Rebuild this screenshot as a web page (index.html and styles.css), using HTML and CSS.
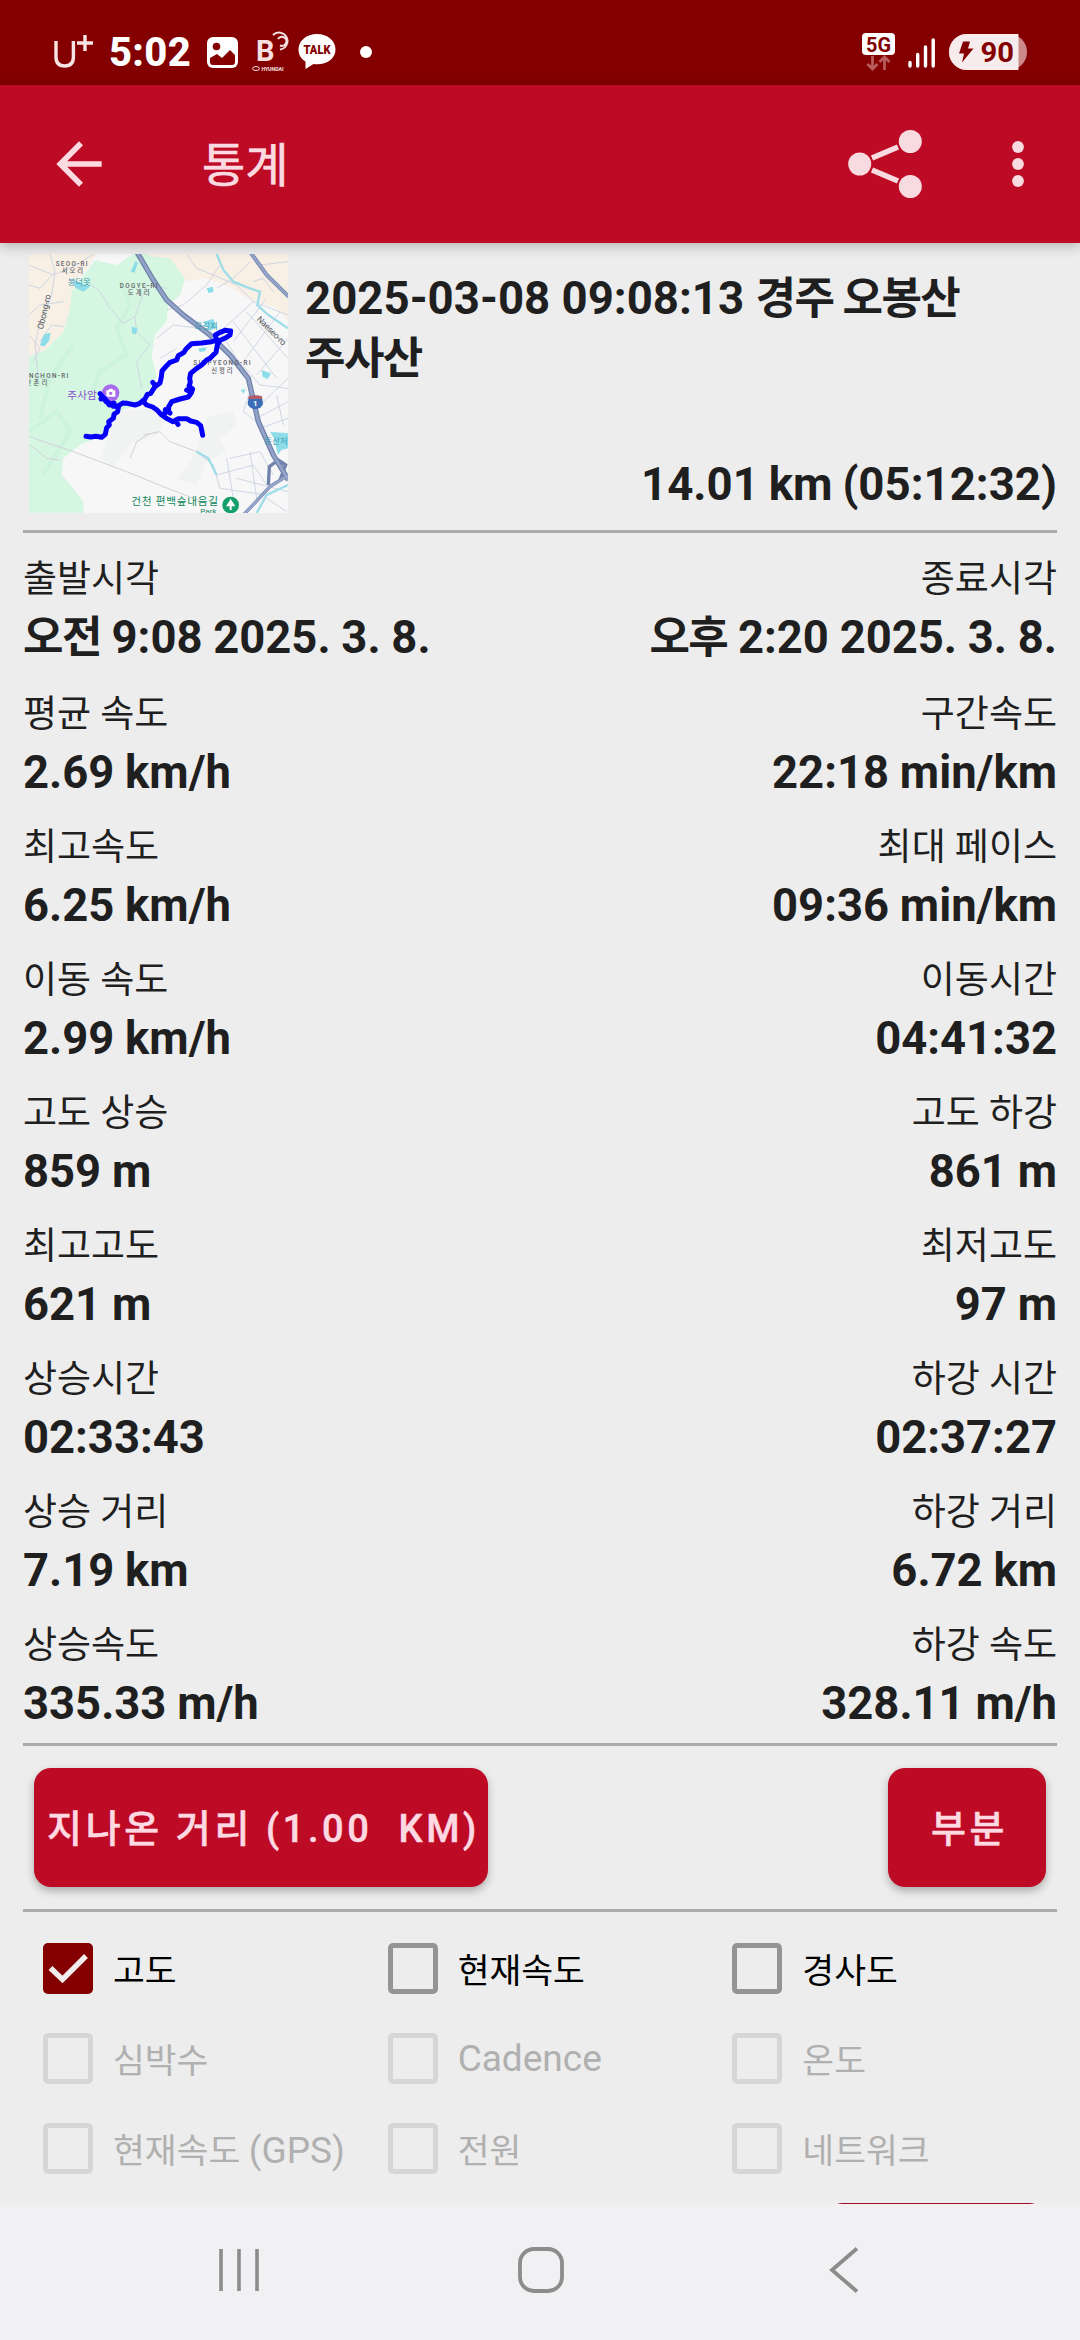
FILE: index.html
```html
<!DOCTYPE html>
<html lang="ko">
<head>
    <meta charset="UTF-8">
    <meta name="viewport" content="width=device-width, initial-scale=1.0">
    <title>통계</title>
    <link rel="stylesheet" href="styles.css">
</head>
<body>
    <div class="status-bar">
        <div class="status-left">
            <svg class="carrier" width="40" height="34" viewBox="0 0 40 34" fill="none" stroke="#f6e4e4" stroke-width="3.4">
                <path d="M2 7v16q0 9 8.700 9t8.700-9V7M23 9h16M31 1v16"/>
            </svg>
            <span class="clock">5:02</span>
            <svg class="gallery" width="31" height="31" viewBox="0 0 31 31">
                <rect width="31" height="31" rx="6" fill="#fff"/>
                <circle cx="9.500" cy="9.500" r="3.800" fill="#840000"/>
                <path d="M3 21l7-4 5 4 8-8 5 5v7q0 3-3 3H6q-3 0-3-3z" fill="#840000"/>
            </svg>
            <svg class="blue-link" width="38" height="42" viewBox="0 0 38 42" fill="none">
                <text x="4" y="30" font-size="29" font-weight="700" fill="#f6e0e0">B</text>
                <path d="M21 4a8.500 8.500 0 1 1 7 14.500M26 8a4.500 4.500 0 1 1 2 6.500" stroke="#f6e0e0" stroke-width="2"/>
                <ellipse cx="4" cy="37.500" rx="3.400" ry="2" stroke="#f6e0e0"/>
                <text x="9.500" y="39.500" font-size="5.200" font-weight="700" fill="#f6e0e0">HYUNDAI</text>
            </svg>
            <svg class="talk" width="38" height="36" viewBox="0 0 38 36">
                <path d="M19 0C8.500 0 .5 6.500.5 15.500c0 5 2.500 9.500 7 12L7.500 35l8-5q1.500.3 3.500.3c10.500 0 18.500-6 18.500-14.800S29.500 0 19 0z" fill="#fff"/>
                <text x="5.500" y="20" font-size="12.500" font-weight="900" textLength="27" lengthAdjust="spacingAndGlyphs" fill="#840000">TALK</text>
            </svg>
            <span class="more-dot"></span>
        </div>
        <div class="status-right">
            <svg width="33" height="38" viewBox="0 0 33 38">
                <rect width="33" height="22" rx="4" fill="#fff"/>
                <text x="4" y="18.500" font-size="20.500" font-weight="700" textLength="25" lengthAdjust="spacingAndGlyphs" fill="#840000">5G</text>
                <path d="M10.500 23v13M5.500 31l5 5 5-5M22.500 37V24M17.500 29l5-5 5 5" fill="none" stroke="#b85c5c" stroke-width="2.800"/>
            </svg>
            <svg class="signal" width="28" height="31" viewBox="0 0 28 31" stroke="#fff" stroke-width="3.400" stroke-linecap="round">
                <path d="M2 25.500v3.500M9.700 17.500V29M17.500 10v19M25.200 3v26"/>
            </svg>
            <svg class="battery" width="78" height="36" viewBox="0 0 78 36">
                <rect width="78" height="36" rx="18" fill="#cd8a8a"/>
                <path d="M18 0h51.500v36H18a18 18 0 0 1 0-36z" fill="#f6eceb"/>
                <path d="M14 7.500h7l-2 7h5.500L13 28.500l2-9H10z" fill="#840000"/>
                <text x="31.500" y="27.500" font-size="27.500" font-weight="700" textLength="33.500" lengthAdjust="spacingAndGlyphs" fill="#840000">90</text>
            </svg>
        </div>
    </div>

    <header class="app-bar">
        <svg class="back" width="68" height="68" viewBox="0 0 24 24"><path fill="#fbdbe1" d="M20 11H7.830l5.590-5.590L12 4l-8 8 8 8 1.410-1.410L7.830 13H20v-2z"/></svg>
        <h1>통계</h1>
        <svg class="share" width="74" height="68" viewBox="0 0 74 68" fill="#f8dbe0">
            <circle cx="11.700" cy="34" r="11.500"/>
            <circle cx="62.300" cy="11.500" r="11.500"/>
            <circle cx="62.300" cy="56.500" r="11.500"/>
            <path d="M24 28L50 17M24 40l26 11" stroke="#f8dbe0" stroke-width="5.600"/>
        </svg>
        <svg class="menu" width="12" height="46" viewBox="0 0 12 46" fill="#f8dbe0">
            <circle cx="6" cy="6" r="5.900"/>
            <circle cx="6" cy="23" r="5.900"/>
            <circle cx="6" cy="40" r="5.900"/>
        </svg>
    </header>

    <main class="content">
        <section class="summary">
            <svg class="map" width="259" height="259" viewBox="27 27 777 777">
                <rect x="27" y="27" width="777" height="777" fill="#f7f7f8"/>
                <path d="M27 27H230L180 100 150 190 130 260 70 320 27 335z" fill="#f8efe5"/>
                <path d="M375 27H804V230L770 190 690 165 640 130 560 100 480 110 440 70z" fill="#f8efe5"/>
                <path d="M225 45L290 60 340 27H380L400 35 450 40 495 100 480 150 445 180 440 230 405 270 395 330 410 400 375 450 340 485 290 500 260 560 215 585 180 600 130 640 125 690 160 730 190 770V804H27V335L75 315 130 260 150 190 155 140z" fill="#d5f7e1"/>
                <path d="M300 110L330 180 290 250 320 330 240 380 210 460M160 300L90 400 60 520M27 560L110 500 150 560 70 690" fill="none" stroke="#ccf3dc" stroke-width="12"/>
                <path d="M560 520L640 495 650 540 600 580 620 620 560 650 530 720 470 700 520 640z" fill="#f0f3f1"/>
                <path d="M290 500L380 490 440 520 410 570 330 600 280 670 240 640z" fill="#f1f3f3"/>
                <g fill="none" stroke="#cfd6e4" stroke-width="3">
                    <path d="M90 27L105 80 95 150 60 230 45 300 55 400M27 60L100 90 170 60 220 27M27 210L60 180 130 170M105 80L60 130 27 120M60 290L95 240 130 245M27 270L60 310 40 350"/>
                    <path d="M200 110L240 140 270 190 310 235 345 215 380 120 440 130M345 215L350 260 390 300 350 350 365 430M440 195L490 180 560 120 600 60M410 280L460 240 540 250M420 340L470 310"/>
                    <path d="M500 27L530 70 580 90 650 120 700 170 600 260 650 340 720 420 804 430M590 130L640 100 690 50M700 170L804 210M720 60L804 50M680 200L804 340M640 230L770 400M740 160L640 290M780 200L670 350M804 280L710 390M804 400L720 480M700 110L730 100 760 140"/>
                    <path d="M710 520L804 470M720 550L804 520M770 450L790 540M690 440L670 500 710 530M630 640L720 620 760 690M590 690L700 660 740 720M620 640L640 760M690 620L710 760M600 730L740 750M650 700L804 740M740 760L800 800"/>
                    <path d="M27 575L160 620 320 680 430 725 560 775M370 570L420 560 450 590 530 620 580 660 600 730M330 640L350 590 390 565M30 600L80 640 120 645" stroke="#d3d1d9"/>
                </g>
                <path d="M590 27L610 75 640 110 690 130 720 140 712 180 745 210 804 250M710 804L740 750 804 720M530 620L565 640 590 690" fill="none" stroke="#9cdde8" stroke-width="7"/>
                <path d="M332 80l14-32 8 5-10 30zM160 105l50 20-20 15-25-12zM60 300l12-32 20-5-5 25-15 17zM335 245l18 5-5 18-12-3zM560 130l18-5 3 15-15 5zM535 310l25-3-5 12-16 2zM725 375l28 10-10 18-15-8zM750 560l54 5v45l-20 5-10 15-12-50zM550 230l30-8 12 25-22 10zM662 435l15-3-6 14z" fill="#8ddce9"/>
                <g fill="none" stroke="#7183ad" stroke-width="16">
                    <path d="M350 20L400 105 440 165 490 210 570 270 630 330 685 400 715 530 760 630 805 705"/>
                    <path d="M690 20L740 90 806 155" stroke-width="12"/>
                    <path d="M805 690L750 725 672 808M745 720L748 665 775 645 797 660 780 705" stroke-width="10"/>
                </g>
                <path d="M350 20L400 105 440 165 490 210 570 270 630 330 685 400 715 530 760 630 805 705M805 690L750 725 672 808M690 20L740 90 806 155" fill="none" stroke="#94a4c9" stroke-width="8"/>
                <g class="place">
                    <text x="107" y="63" textLength="96">SEOO-RI</text>
                    <text x="125" y="84" textLength="64">서오리</text>
                    <text x="299" y="128" textLength="114">DOGYE-RI</text>
                    <text x="323" y="149" textLength="66">도계리</text>
                    <text x="520" y="361" textLength="172">SINPYEONG-RI</text>
                    <text x="574" y="383" textLength="64">신평리</text>
                    <text x="27" y="398" textLength="118">NCHON-RI</text>
                    <text x="16" y="419" textLength="66">천촌리</text>
                </g>
                <g class="water">
                    <text x="143" y="121">봉덕못</text>
                    <text x="524" y="252">모길지</text>
                    <text x="733" y="597" textLength="70">동산저</text>
                </g>
                <text class="road" transform="translate(69 254) rotate(-77)" textLength="106">Obong-ro</text>
                <text class="road" transform="translate(709 224) rotate(45)" textLength="112">Naeseo-ro</text>
                <text class="temple" x="142" y="461">주사암</text>
                <circle cx="272" cy="444" r="26" fill="#a76bec"/>
                <path d="M259 436h6l3-5h9l3 5h6v19h-27z" fill="#fff"/>
                <circle cx="272" cy="445" r="5" fill="#a76bec"/>
                <text class="park" x="334" y="781" textLength="260">건천 편백숲내음길</text>
                <text class="park-sub" x="541" y="808">Park</text>
                <circle cx="632" cy="780" r="25" fill="#16a06c"/>
                <path d="M632 762l14 22h-11v11h-6v-11h-11z" fill="#fff"/>
                <path d="M686 456q20-7 40 0l3 20q-2 12-23 17-21-5-23-17z" fill="#3c6cb8"/>
                <path d="M686 454q20-6 40 0v8h-40z" fill="#b35d68"/>
                <text x="699" y="483" font-size="24" font-weight="700" fill="#fff">1</text>
                <!-- recorded track -->
                <g fill="none" stroke="#0500f8" stroke-width="15" stroke-linejoin="round" stroke-linecap="round">
                    <path d="M198 574L212 576 228 574 245 577 256 568 260 548 268 540 266 530 280 520 282 508 293 500 296 482 280 484 270 475 258 470 250 458 240 446M243 462L254 460 268 480 282 474M296 482L308 474 322 475 345 480 358 476 375 462 382 448 392 445 405 425 420 414 424 396 426 378 440 362 450 352 470 345 475 332 492 322 498 312 515 296 545 294 575 290 590 286 586 270 600 262 615 256 632 258 630 270 618 278 600 286 592 300 588 322 570 340 560 345 545 360 530 370 512 385 509 400 511 412 507 424 518 432 513 445 505 456 480 462 455 470 446 485 446 496 432 506"/>
                    <path d="M368 468L380 480 398 486 412 496 425 510 440 520 458 530 475 521 500 521 512 528 530 532 542 542 545 556 548 571M470 532L474 538M405 420L398 412M500 435L514 442M436 494L450 504"/>
                </g>
            </svg>
            <div class="summary-text">
                <h2>2025-03-08 09:08:13 <span class="ko">경주 오봉산 주사산</span></h2>
                <p class="total">14.01 km (05:12:32)</p>
            </div>
        </section>

        <section class="stats">
            <div class="stat"><span class="label">출발시각</span><span class="value"><span class="ko">오전</span> 9:08 2025. 3. 8.</span></div>
            <div class="stat right"><span class="label">종료시각</span><span class="value"><span class="ko">오후</span> 2:20 2025. 3. 8.</span></div>
            <div class="stat"><span class="label">평균 속도</span><span class="value">2.69 km/h</span></div>
            <div class="stat right"><span class="label">구간속도</span><span class="value">22:18 min/km</span></div>
            <div class="stat"><span class="label">최고속도</span><span class="value">6.25 km/h</span></div>
            <div class="stat right"><span class="label">최대 페이스</span><span class="value">09:36 min/km</span></div>
            <div class="stat"><span class="label">이동 속도</span><span class="value">2.99 km/h</span></div>
            <div class="stat right"><span class="label">이동시간</span><span class="value">04:41:32</span></div>
            <div class="stat"><span class="label">고도 상승</span><span class="value">859 m</span></div>
            <div class="stat right"><span class="label">고도 하강</span><span class="value">861 m</span></div>
            <div class="stat"><span class="label">최고고도</span><span class="value">621 m</span></div>
            <div class="stat right"><span class="label">최저고도</span><span class="value">97 m</span></div>
            <div class="stat"><span class="label">상승시간</span><span class="value">02:33:43</span></div>
            <div class="stat right"><span class="label">하강 시간</span><span class="value">02:37:27</span></div>
            <div class="stat"><span class="label">상승 거리</span><span class="value">7.19 km</span></div>
            <div class="stat right"><span class="label">하강 거리</span><span class="value">6.72 km</span></div>
            <div class="stat"><span class="label">상승속도</span><span class="value">335.33 m/h</span></div>
            <div class="stat right"><span class="label">하강 속도</span><span class="value">328.11 m/h</span></div>
        </section>

        <section class="actions">
            <button class="btn btn-distance">지나온 거리 (1.00&nbsp; KM)</button>
            <button class="btn btn-part">부분</button>
        </section>

        <section class="checks">
            <label class="check checked">
                <span class="box"><svg width="50" height="51" viewBox="0 0 50 51" fill="none" stroke="#f2eded" stroke-width="5.500"><path d="M7.500 25l12 11.500L43 13"/></svg></span>고도
            </label>
            <label class="check"><span class="box"></span>현재속도</label>
            <label class="check"><span class="box"></span>경사도</label>
            <label class="check disabled"><span class="box"></span>심박수</label>
            <label class="check disabled"><span class="box"></span><span class="latin">Cadence</span></label>
            <label class="check disabled"><span class="box"></span>온도</label>
            <label class="check disabled"><span class="box"></span><span>현재속도 <span class="latin">(GPS)</span></span></label>
            <label class="check disabled"><span class="box"></span>전원</label>
            <label class="check disabled"><span class="box"></span>네트워크</label>
        </section>
        <div class="next-button"></div>
    </main>

    <nav class="nav-bar">
        <svg width="42" height="46" viewBox="0 0 42 46" stroke="#8c8c8d" stroke-width="3.600"><path d="M3 2v42M21 2v42M39 2v42"/></svg>
        <svg class="home" width="46" height="46" viewBox="0 0 46 46" fill="none" stroke="#8c8c8d" stroke-width="3.800"><rect x="2" y="2" width="42" height="42" rx="14"/></svg>
        <svg width="30" height="46" viewBox="0 0 30 46" fill="none" stroke="#8c8c8d" stroke-width="3.800"><path d="M28 1.500L3 23l25 21.500"/></svg>
    </nav>
</body>
</html>
```

FILE: styles.css
```css
* {
    margin: 0;
    padding: 0;
    box-sizing: border-box;
}

body {
    width: 1080px;
    height: 2340px;
    display: flex;
    flex-direction: column;
    overflow: hidden;
    background: #ededed;
    color: #1f1f1f;
    font-family: Roboto, "Noto Sans CJK KR", sans-serif;
}

svg {
    display: block;
    flex: none;
}

.status-bar {
    height: 85px;
    flex: none;
    background: #840000;
    color: #fff;
    display: flex;
    justify-content: space-between;
    padding: 19px 53px 0 54px;
}

.status-left,
.status-right {
    height: 66px;
    display: flex;
    align-items: center;
}

.carrier {
    margin-bottom: 3px;
}

.clock {
    width: 83px;
    margin-left: 15px;
    font-size: 40px;
    font-weight: 800;
    letter-spacing: 0.3px;
}

.gallery {
    margin-left: 15px;
}

.blue-link {
    margin-left: 14px;
}

.talk {
    margin-left: 8px;
}

.more-dot {
    width: 12px;
    height: 12px;
    margin-left: 24px;
    border-radius: 50%;
    background: #fff;
}

.signal {
    margin-left: 13px;
}

.battery {
    margin-left: 13px;
}

.app-bar {
    height: 158px;
    flex: none;
    position: relative;
    z-index: 1;
    display: flex;
    align-items: center;
    padding: 0 56px 0 45px;
    background: #bd0a25;
    box-shadow: 0 3px 12px rgba(0, 0, 0, 0.25);
}

.app-bar h1 {
    flex: 1;
    margin-left: 89px;
    padding-bottom: 5px;
    color: #fbdbe1;
    font-size: 47px;
    font-weight: 400;
    -webkit-text-stroke: 0.7px #fbdbe1;
}

.menu {
    margin-left: 90px;
}

.content {
    height: 1961px;
    flex: none;
    padding: 11px 23px 0;
    overflow: hidden;
}

.summary {
    height: 276px;
    display: flex;
    padding-left: 6px;
}

.place {
    font-size: 19px;
    font-weight: 500;
    fill: #5f6368;
}

.water {
    font-size: 25px;
    fill: #3b9bb2;
}

.road {
    font-size: 26px;
    fill: #555b63;
}

.temple {
    font-size: 32px;
    fill: #8d4fd0;
}

.park {
    font-size: 32px;
    fill: #14875b;
}

.park-sub {
    font-size: 24px;
    fill: #14875b;
}

.summary-text {
    flex: 1;
    display: flex;
    flex-direction: column;
    justify-content: space-between;
    padding: 15px 0 15px 17px;
}

.summary-text h2 {
    width: 700px;
    font-size: 45.6px;
    line-height: 60px;
    font-weight: 700;
    word-break: keep-all;
}

.total {
    font-size: 45.6px;
    line-height: 60px;
    font-weight: 700;
    text-align: right;
    word-spacing: -1.5px;
}

.ko {
    font-size: 44px;
    letter-spacing: -1.6px;
}

.stats {
    height: 1213px;
    display: grid;
    grid-template-columns: 1fr 1fr;
    grid-template-rows: 135px;
    grid-auto-rows: 133px;
    padding-top: 20px;
    border-top: 3px solid #aaa;
}

.stat {
    display: flex;
    flex-direction: column;
    white-space: nowrap;
}

.right {
    align-items: flex-end;
}

.label {
    margin-bottom: 1px;
    font-size: 37px;
    line-height: 54px;
}

.value {
    font-size: 45.4px;
    line-height: 60px;
    font-weight: 700;
    word-spacing: -0.5px;
}

.actions {
    height: 166px;
    display: flex;
    justify-content: space-between;
    align-items: flex-start;
    padding: 22px 11px 0;
    border-top: 3px solid #aaa;
}

.btn {
    height: 119px;
    padding: 0 0 5px 5px;
    border: none;
    border-radius: 17px;
    background: #bd0a25;
    color: #ffd9e2;
    font-family: inherit;
    font-size: 38px;
    font-weight: 500;
    letter-spacing: 3.6px;
    white-space: nowrap;
    -webkit-text-stroke: 0.5px #ffd9e2;
    box-shadow: 0 4px 8px rgba(0, 0, 0, 0.28);
}

.btn-distance {
    width: 454px;
}

.btn-part {
    width: 158px;
}

.checks {
    display: grid;
    grid-template-columns: repeat(3, 1fr);
    grid-auto-rows: 90px;
    padding-top: 11px;
    border-top: 3px solid #aaa;
}

.check {
    display: flex;
    align-items: center;
    padding-left: 20px;
    color: #000;
    font-size: 34.6px;
    white-space: nowrap;
}

.latin {
    font-size: 37px;
}

.box {
    width: 50px;
    height: 51px;
    margin-right: 20px;
    flex: none;
    border: 5px solid #949494;
    border-radius: 5px;
}

.checked .box {
    border: none;
    background: #840000;
}

.disabled {
    color: #b0b0b0;
}

.disabled .box {
    border-color: #d6d6d6;
}

.next-button {
    width: 220px;
    height: 119px;
    margin: 10px 11px 0 auto;
    border-radius: 17px;
    background: #a30a28;
}

.nav-bar {
    flex: 1;
    display: flex;
    align-items: flex-start;
    justify-content: space-between;
    padding: 43px 221px 0 218px;
    background: #f1f1f3;
}

.home {
    margin-right: 7px;
}
```
